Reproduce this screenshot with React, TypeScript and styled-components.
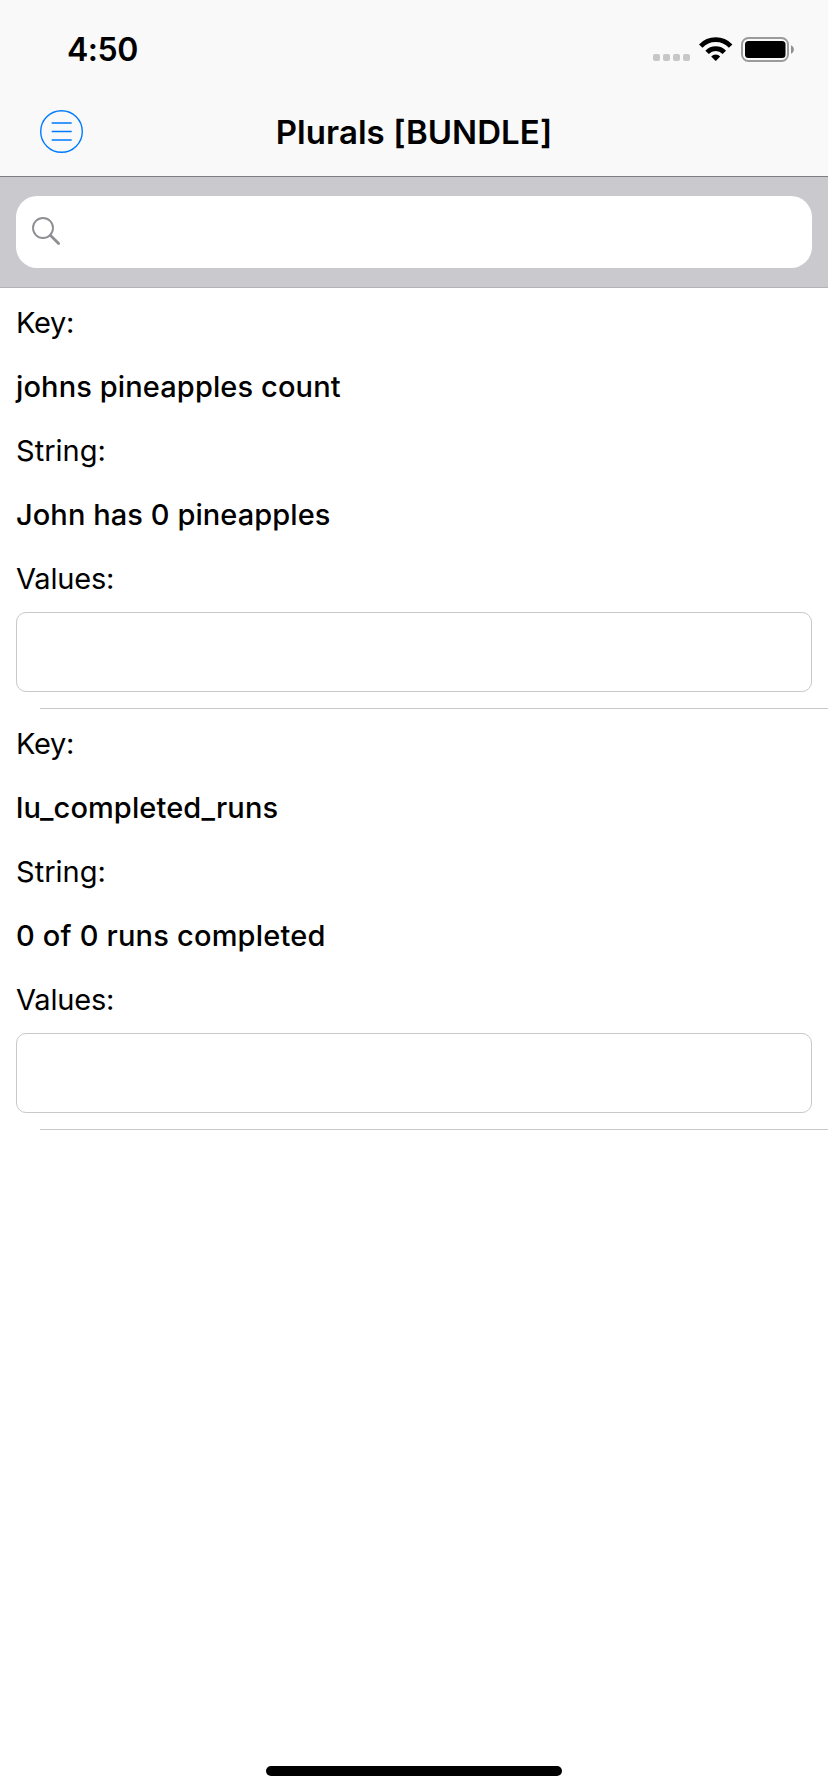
import React from "react";
import styled, { createGlobalStyle } from "styled-components";

const GlobalStyle = createGlobalStyle`
  *, *::before, *::after { box-sizing: border-box; }
  body {
    margin: 0;
    background: #fff;
    color: #000;
    font-family: Inter, "Liberation Sans", sans-serif;
  }
`;

const Screen = styled.div`
  display: flex;
  flex-direction: column;
  width: 828px;
  height: 1792px;
  background: #fff;
`;

const Header = styled.header`
  height: 177px;
  background: #f9f9f9;
  border-bottom: 1px solid #7f7f80;
`;

const StatusBar = styled.div`
  display: flex;
  justify-content: space-between;
  height: 88px;
  padding: 37px 34px 0 67px;
`;

const Time = styled.time`
  height: 26px;
  font-size: 32px;
  font-weight: 600;
  line-height: 26px;
  letter-spacing: -0.48px;
`;

const StatusIcons = styled.div`
  display: flex;
  align-items: flex-start;
  height: 26px;
`;

const SignalDots = styled.div`
  display: flex;
  gap: 3px;
  margin: 17px 9px 0 0;
`;

const Dot = styled.span`
  width: 7px;
  height: 7px;
  border-radius: 2px;
  background: #c7c7c7;
`;

const WifiIcon = styled.svg`
  width: 34px;
  height: 25px;
  margin-right: 8px;
`;

const BatteryIcon = styled.svg`
  width: 53px;
  height: 25px;
`;

const NavBar = styled.nav`
  display: grid;
  grid-template-columns: 44px 1fr 44px;
  height: 88px;
  padding: 21px 39px 0;
`;

const MenuButton = styled.button`
  display: flex;
  width: 45px;
  height: 45px;
  padding: 0;
  border: 0;
  background: none;
  color: #007aff;
`;

const Title = styled.h1`
  margin: 1px 0 0;
  font-size: 33px;
  font-weight: 600;
  line-height: 44px;
  letter-spacing: 0.06px;
  text-align: center;
`;

const SearchBar = styled.div`
  height: 111px;
  padding: 19px 16px;
  background: #c9c9ce;
  border-bottom: 1px solid #b2b2b7;
`;

const SearchField = styled.div`
  display: flex;
  align-items: center;
  height: 72px;
  padding-left: 15px;
  border-radius: 21px;
  background: #fff;
  color: #8e8e93;
`;

const List = styled.main`
  flex: 1;
`;

const Cell = styled.section`
  position: relative;
  height: 421px;
  padding: 3px 16px 0;

  &::after {
    content: "";
    position: absolute;
    right: 0;
    bottom: 0;
    left: 40px;
    height: 1px;
    background: #c8c8ca;
  }
`;

const Line = styled.div<{ $strong?: boolean; $tracking: number }>`
  height: 64px;
  font-size: 29px;
  font-weight: ${(p) => (p.$strong ? 500 : 400)};
  line-height: 64px;
  letter-spacing: ${(p) => p.$tracking}px;
  white-space: nowrap;
`;

const ValueBox = styled.div`
  height: 80px;
  margin-top: 1px;
  border: 1px solid #c9c9c9;
  border-radius: 10px;
`;

const HomeIndicator = styled.div`
  align-self: center;
  width: 296px;
  height: 10px;
  margin-bottom: 16px;
  border-radius: 5px;
  background: #000;
`;

interface Plural {
  key: string;
  keyTracking: number;
  text: string;
  textTracking: number;
}

const plurals: Plural[] = [
  {
    key: "johns pineapples count",
    keyTracking: 0.12,
    text: "John has 0 pineapples",
    textTracking: 0.08,
  },
  {
    key: "lu_completed_runs",
    keyTracking: 0.11,
    text: "0 of 0 runs completed",
    textTracking: 0.2,
  },
];

export default function App() {
  return (
    <>
      <GlobalStyle />
      <Screen>
        <Header>
          <StatusBar>
            <Time>4:50</Time>
            <StatusIcons>
              <SignalDots>
                <Dot />
                <Dot />
                <Dot />
                <Dot />
              </SignalDots>
              <WifiIcon viewBox="0 0 34 25" fill="none" stroke="#000" strokeWidth="4.8">
                <path d="M1.75 9.1 A20.7 20.7 0 0 1 31.65 9.1" />
                <path d="M8.1 15.3 A11.9 11.9 0 0 1 25.3 15.3" />
                <path
                  d="M12.2 19.4 A6.2 6.2 0 0 1 21.2 19.4 L17.3 23.5 Q16.7 24.1 16.1 23.5 Z"
                  fill="#000"
                  stroke="none"
                />
              </WifiIcon>
              <BatteryIcon viewBox="0 0 53 25">
                <rect x="1" y="1" width="46" height="23" rx="6.5" fill="none" stroke="#9b9b9b" strokeWidth="2" />
                <rect x="4" y="4" width="40.5" height="17" rx="3.5" fill="#000" />
                <path d="M50 8.2 C53.8 9.6 53.8 15.4 50 16.8 Z" fill="#8f8f8f" />
              </BatteryIcon>
            </StatusIcons>
          </StatusBar>
          <NavBar>
            <MenuButton aria-label="Menu">
              <svg width="45" height="45" viewBox="0 0 45 45" fill="none" stroke="currentColor">
                <circle cx="22.5" cy="22.5" r="20.8" strokeWidth="1.4" />
                <path d="M12.7 14H32.7M12.7 22.5H32.7M12.7 31H32.7" strokeWidth="1.5" />
              </svg>
            </MenuButton>
            <Title>Plurals [BUNDLE]</Title>
          </NavBar>
        </Header>
        <SearchBar>
          <SearchField role="search">
            <svg width="30" height="30" viewBox="0 0 30 30" fill="none" stroke="currentColor">
              <circle cx="12" cy="11" r="10" strokeWidth="1.9" />
              <path d="M19.3 18.3L27.6 26.6" strokeWidth="2.8" strokeLinecap="round" />
            </svg>
          </SearchField>
        </SearchBar>
        <List>
          {plurals.map((p) => (
            <Cell key={p.key}>
              <Line $tracking={-0.35}>Key:</Line>
              <Line $strong $tracking={p.keyTracking}>
                {p.key}
              </Line>
              <Line $tracking={0.02}>String:</Line>
              <Line $strong $tracking={p.textTracking}>
                {p.text}
              </Line>
              <Line $tracking={-0.2}>Values:</Line>
              <ValueBox />
            </Cell>
          ))}
        </List>
        <HomeIndicator />
      </Screen>
    </>
  );
}
